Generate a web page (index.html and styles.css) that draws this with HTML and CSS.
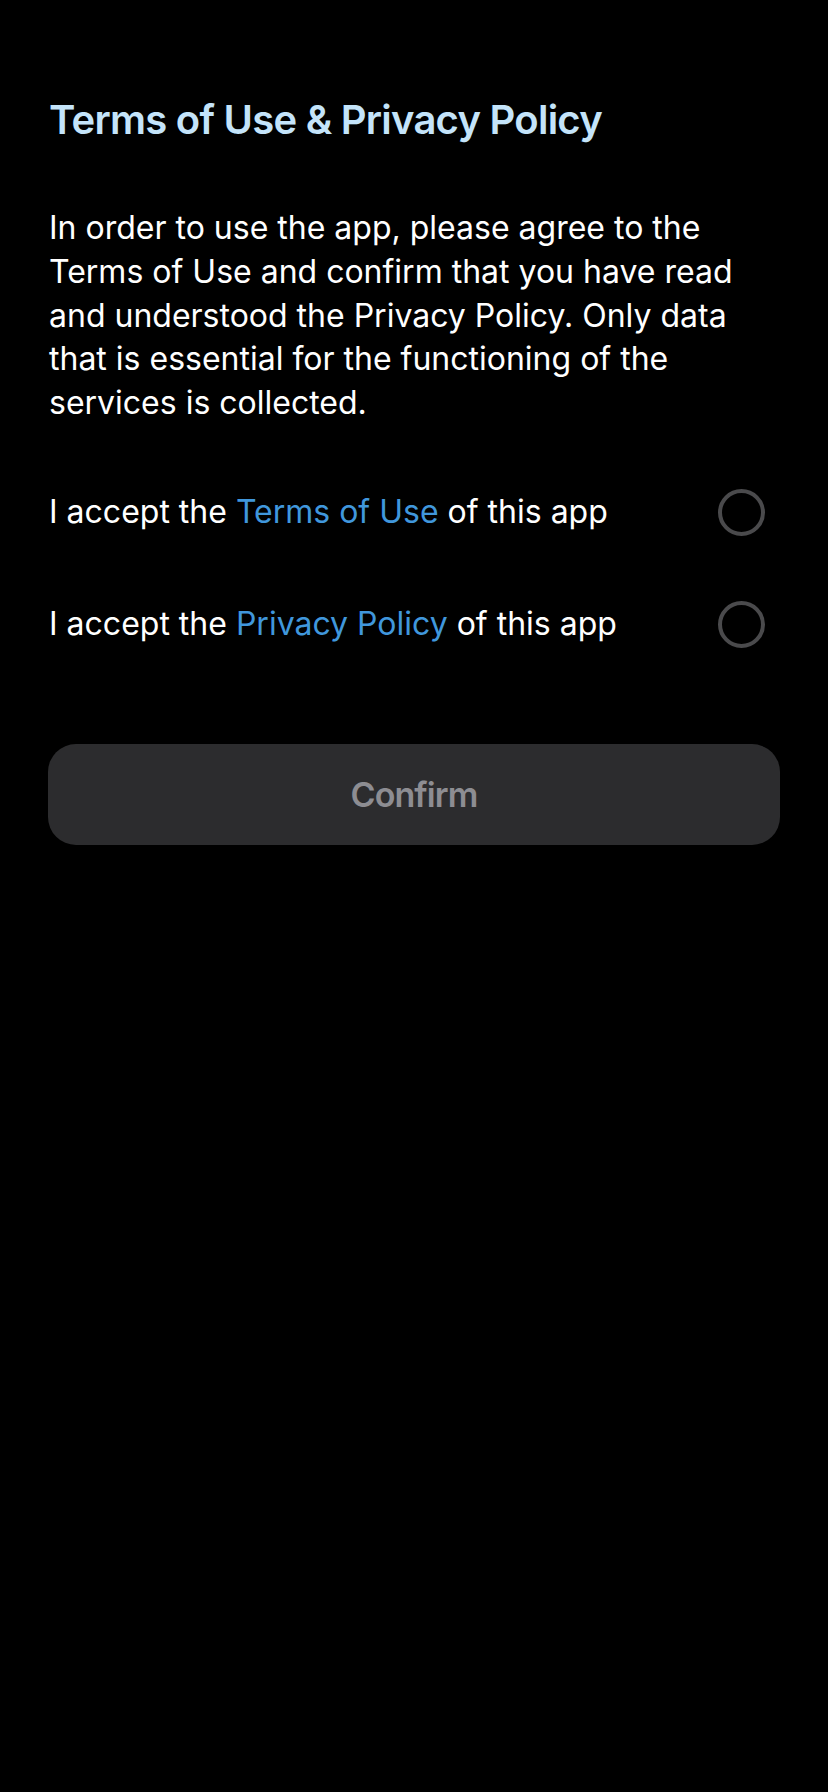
FILE: index.html
```html
<!DOCTYPE html>
<html lang="en">
<head>
<meta charset="utf-8">
<title>Terms of Use &amp; Privacy Policy</title>
<link rel="stylesheet" href="styles.css">
</head>
<body>
<main class="screen">
  <h1 class="title">Terms of Use &amp; Privacy Policy</h1>
  <p class="intro">In order to use the app, please agree to the<br>Terms of Use and confirm that you have read<br>and understood the Privacy Policy. Only data<br>that is essential for the functioning of the<br>services is collected.</p>
  <div class="consents">
    <div class="consent">
      <span class="consent-text">I accept the <a class="link" href="#">Terms of Use</a> of this app</span>
      <span class="radio"></span>
    </div>
    <div class="consent">
      <span class="consent-text">I accept the <a class="link" href="#">Privacy Policy</a> of this app</span>
      <span class="radio"></span>
    </div>
  </div>
  <button class="confirm" type="button" disabled>Confirm</button>
</main>
</body>
</html>
```
FILE: styles.css
```css
html, body {
  margin: 0;
  padding: 0;
  background: #000;
}
body {
  font-family: "Inter", "Roboto", "Liberation Sans", sans-serif;
  color: #fff;
  min-height: 1792px;
}
.screen {
  display: flex;
  flex-direction: column;
  padding: 96px 48px 0 49px;
}
.title {
  margin: 0;
  font-size: 40px;
  line-height: 48px;
  font-weight: 600;
  color: #c4e4fa;
  letter-spacing: -0.75px;
}
.intro {
  margin: 62px 0 0;
  font-size: 32px;
  line-height: 43.75px;
  font-weight: 400;
  white-space: nowrap;
  letter-spacing: 0;
}
.consents {
  margin-top: 64px;
  display: flex;
  flex-direction: column;
  gap: 65px;
}
.consent {
  display: flex;
  align-items: center;
  justify-content: space-between;
  height: 47px;
  padding-right: 15.5px;
}
.consent-text {
  font-size: 32px;
  line-height: 44px;
  letter-spacing: 0;
  white-space: nowrap;
}
.link {
  color: #4097dc;
  text-decoration: none;
}
.radio {
  width: 47px;
  height: 47px;
  box-sizing: border-box;
  border: 4.7px solid #4a4a4c;
  border-radius: 50%;
  flex: none;
}
.confirm {
  margin: 96px 0 0 -1px;
  height: 101px;
  border: none;
  border-radius: 28px;
  background: #2c2c2e;
  color: #8d8d92;
  font-family: inherit;
  font-size: 34px;
  font-weight: 600;
  letter-spacing: -0.9px;
  padding: 0;
}
```
